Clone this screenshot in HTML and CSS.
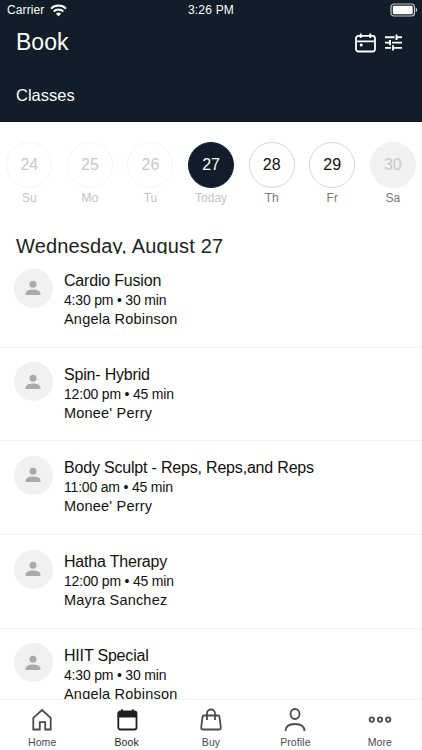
FILE: index.html
```html
<!DOCTYPE html>
<html lang="en">
<head>
  <meta charset="UTF-8">
  <meta name="viewport" content="width=device-width, initial-scale=1.0">
  <title>Book</title>
  <link rel="stylesheet" href="styles.css">
</head>
<body>
  <svg class="sprite" width="0" height="0">
    <symbol id="person" viewBox="0 0 16 16">
      <circle cx="8" cy="4.200" r="3.500"/>
      <path d="M.6 15v-1.600C.6 10.800 4.500 9.500 8 9.500s7.400 1.300 7.400 3.900V15z"/>
    </symbol>
  </svg>

  <header class="header">
    <div class="status-bar">
      <div class="carrier">
        <span>Carrier</span>
        <svg width="17" height="13" viewBox="0 0 17 13" fill="none" stroke="#fff" stroke-width="2">
          <path d="M1 4.600a10.800 10.800 0 0 1 15 0M3.700 7.500a6.900 6.900 0 0 1 9.600 0"/>
          <path d="M8.500 12.300L5.900 9.700a3.800 3.800 0 0 1 5.200 0z" fill="#fff" stroke="none"/>
        </svg>
      </div>
      <span class="clock">3:26 PM</span>
      <svg class="battery" width="28" height="14" viewBox="0 0 28 14">
        <rect x="1" y="1" width="23.500" height="12" rx="3" fill="none" stroke="#c5c9cc" stroke-width="1.200"/>
        <rect x="2.800" y="2.800" width="19.900" height="8.400" rx="1.200" fill="#fff"/>
        <path d="M25.800 4.800c1.800.6 1.800 3.800 0 4.400z" fill="#c5c9cc"/>
      </svg>
    </div>
    <div class="title-bar">
      <h1>Book</h1>
      <div class="actions">
        <svg width="21" height="20" viewBox="0 0 21 20" fill="none" stroke="#fff" stroke-width="1.800">
          <rect x="1" y="2.800" width="19" height="15.700" rx="2.500"/>
          <path d="M1 8.300h19M5.700.5v4.500M15.300.5v4.500"/>
          <circle cx="6.200" cy="12" r="1.500" fill="#fff" stroke="none"/>
        </svg>
        <svg width="17" height="17" viewBox="0 0 17 17" fill="none" stroke="#fff" stroke-width="1.900">
          <path d="M0 3.300h9.500M11.500 3.300H17M11.500.6v5.400M0 8.600h5M5 5.900v5.400M7 8.600h10M0 13.900h6M8 11.200v5.400M8 13.900h9"/>
        </svg>
      </div>
    </div>
    <h2>Classes</h2>
  </header>

  <nav class="week">
    <div class="day past"><span class="num">24</span><span class="name">Su</span></div>
    <div class="day past"><span class="num">25</span><span class="name">Mo</span></div>
    <div class="day past"><span class="num">26</span><span class="name">Tu</span></div>
    <div class="day today"><span class="num">27</span><span class="name">Today</span></div>
    <div class="day"><span class="num">28</span><span class="name">Th</span></div>
    <div class="day"><span class="num">29</span><span class="name">Fr</span></div>
    <div class="day closed"><span class="num">30</span><span class="name">Sa</span></div>
  </nav>

  <h3 class="date">Wednesday, August 27</h3>

  <main class="classes">
    <article class="class">
      <div class="avatar"><svg width="16" height="16"><use href="#person"/></svg></div>
      <div class="info">
        <h4>Cardio Fusion</h4>
        <p class="time">4:30 pm • 30 min</p>
        <p class="teacher">Angela Robinson</p>
      </div>
    </article>
    <article class="class">
      <div class="avatar"><svg width="16" height="16"><use href="#person"/></svg></div>
      <div class="info">
        <h4>Spin- Hybrid</h4>
        <p class="time">12:00 pm • 45 min</p>
        <p class="teacher">Monee' Perry</p>
      </div>
    </article>
    <article class="class">
      <div class="avatar"><svg width="16" height="16"><use href="#person"/></svg></div>
      <div class="info">
        <h4>Body Sculpt - Reps, Reps,and Reps</h4>
        <p class="time">11:00 am • 45 min</p>
        <p class="teacher">Monee' Perry</p>
      </div>
    </article>
    <article class="class">
      <div class="avatar"><svg width="16" height="16"><use href="#person"/></svg></div>
      <div class="info">
        <h4>Hatha Therapy</h4>
        <p class="time">12:00 pm • 45 min</p>
        <p class="teacher">Mayra Sanchez</p>
      </div>
    </article>
    <article class="class">
      <div class="avatar"><svg width="16" height="16"><use href="#person"/></svg></div>
      <div class="info">
        <h4>HIIT Special</h4>
        <p class="time">4:30 pm • 30 min</p>
        <p class="teacher">Angela Robinson</p>
      </div>
    </article>
  </main>

  <footer class="tabs">
    <a class="tab">
      <svg width="24" height="24" viewBox="0 0 24 24"><path d="M3.300 9.800L12 2l8.700 7.800v11.700h-5.500v-7.300h-5.400v7.300H3.300z"/></svg>
      <span>Home</span>
    </a>
    <a class="tab active">
      <svg width="24" height="24" viewBox="0 0 24 24"><rect x="3.300" y="3.500" width="18.200" height="18" rx="2"/><path d="M2.800 4h19.200v5.500H2.800z" fill="currentColor" stroke="none"/><path d="M7 1.300v4M17.800 1.300v4"/></svg>
      <span>Book</span>
    </a>
    <a class="tab">
      <svg width="24" height="24" viewBox="0 0 24 24"><path d="M5 7.500h14q1.200 0 1.400 1l1.400 11q.2 2-2 2H4.200q-2.200 0-2-2L3.600 8.500q.2-1 1.400-1zM8 12V5.500a4 4 0 0 1 8 0V12"/></svg>
      <span>Buy</span>
    </a>
    <a class="tab">
      <svg width="24" height="24" viewBox="0 0 24 24"><ellipse cx="12" cy="6" rx="4.500" ry="5"/><path d="M2.500 23c0-4.500 3.500-7 9.500-7s9.500 2.500 9.500 7"/></svg>
      <span>Profile</span>
    </a>
    <a class="tab">
      <svg width="24" height="24" viewBox="0 0 24 24"><circle cx="3.800" cy="11.600" r="2.200"/><circle cx="12" cy="11.600" r="2.200"/><circle cx="20.200" cy="11.600" r="2.200"/></svg>
      <span>More</span>
    </a>
  </footer>
</body>
</html>
```
FILE: styles.css
```css
* {
  box-sizing: border-box;
}
body {
  margin: 0;
  height: 750px;
  display: flex;
  flex-direction: column;
  overflow: hidden;
  font-family: "Liberation Sans", Arial, sans-serif;
  background: #fff;
  color: #111;
}
h1, h2, h3, h4, p {
  margin: 0;
  font-weight: normal;
}
.sprite {
  display: none;
}
.header {
  flex: none;
  height: 122px;
  background: #111d28;
  color: #fff;
}
.status-bar {
  display: grid;
  grid-template-columns: 1fr auto 1fr;
  align-items: center;
  height: 20px;
  padding: 0 4px 0 7px;
  font-size: 12px;
}
.carrier {
  display: flex;
  align-items: center;
  gap: 6px;
  letter-spacing: 0.1px;
}
.clock {
  margin-right: 3px;
  letter-spacing: 0.2px;
}
.battery {
  justify-self: end;
}
.title-bar {
  display: flex;
  align-items: center;
  justify-content: space-between;
  height: 45px;
  padding: 0 20px 0 16px;
}
.title-bar h1 {
  font-size: 23px;
}
.actions {
  display: flex;
  align-items: center;
  gap: 9px;
}
.header h2 {
  padding: 20px 16px 0;
  font-size: 16.500px;
  line-height: 20px;
}
.week {
  flex: none;
  display: grid;
  grid-template-columns: repeat(7, 60.600px);
  height: 110px;
  margin-left: -1px;
  padding-top: 19.500px;
}
.day {
  display: flex;
  flex-direction: column;
  align-items: center;
  gap: 3px;
}
.num {
  display: flex;
  align-items: center;
  justify-content: center;
  width: 46px;
  height: 46px;
  border: 1px solid #d5d5d5;
  border-radius: 50%;
  font-size: 16px;
}
.name {
  font-size: 12px;
  line-height: 15px;
  color: #777;
}
.past .num {
  border-color: #f4f4f4;
  color: #c8c8c8;
}
.past .name,
.today .name {
  color: #c4c4c4;
}
.today .num {
  border-color: #111d28;
  background: #111d28;
  color: #fff;
}
.closed .num {
  border-color: #f1f1f1;
  background: #f1f1f1;
  color: #c8c8c8;
}
.date {
  flex: none;
  height: 22px;
  padding-left: 16px;
  overflow: hidden;
  font-size: 20px;
  line-height: 28px;
  letter-spacing: 0.17px;
  color: #222;
}
.classes {
  flex: 1;
  min-height: 0;
  overflow: hidden;
}
.class {
  display: flex;
  gap: 11px;
  height: 93.700px;
  padding: 14.500px 14px 0;
  border-bottom: 1px solid #f0f0f0;
}
.avatar {
  display: flex;
  align-items: center;
  justify-content: center;
  width: 39px;
  height: 39px;
  border-radius: 50%;
  background: #f1f1f1;
  fill: #aaa;
}
.avatar svg {
  margin: 0 1px 0 0;
}
.info {
  padding-top: 2.400px;
}
.info h4 {
  font-size: 16px;
  line-height: 20px;
  letter-spacing: -0.19px;
}
.time {
  font-size: 14px;
  line-height: 19px;
  letter-spacing: -0.19px;
}
.teacher {
  font-size: 14.500px;
  line-height: 19px;
  letter-spacing: 0.2px;
}
.tabs {
  flex: none;
  display: grid;
  grid-template-columns: repeat(5, 1fr);
  height: 51px;
  padding-top: 8px;
  border-top: 1px solid #f0f0f0;
  background: #fff;
}
.tab {
  display: flex;
  flex-direction: column;
  align-items: center;
  gap: 3px;
  font-size: 10.500px;
  line-height: 14px;
  letter-spacing: 0.1px;
  color: #4a4b52;
}
.tab svg {
  fill: none;
  stroke: currentColor;
  stroke-width: 1.800;
}
.tab.active {
  color: #1e1f25;
}
```
